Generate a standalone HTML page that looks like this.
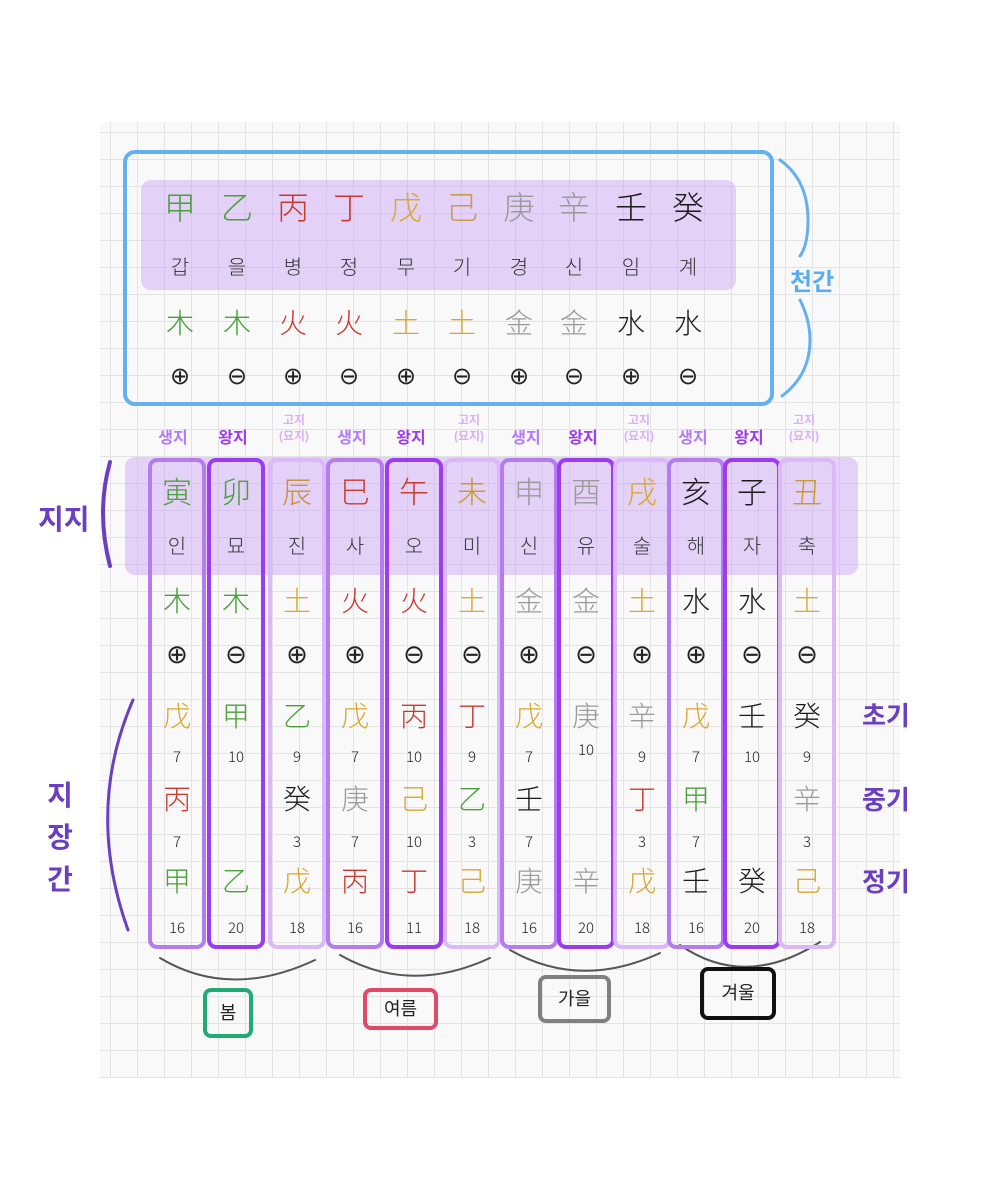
<!DOCTYPE html>
<html><head><meta charset="utf-8"><style>
body{margin:0;width:1000px;height:1200px;background:#fff;position:relative;overflow:hidden;font-family:"Liberation Sans","Noto Sans CJK KR",sans-serif}
.grid{position:absolute;left:100px;top:122px;width:800px;height:956px;background-color:#f9f9f9;
background-image:linear-gradient(#e3e3e3 1px,transparent 1px),linear-gradient(90deg,#e3e3e3 1px,transparent 1px);background-size:27px 27px;background-position:10px 10px}
.a{position:absolute}
.hl{position:absolute;background:rgba(200,160,245,.45);border-radius:10px}
.col{position:absolute;top:458px;width:50px;height:483px;border-radius:9px;border:4px solid}
.s{border-color:#b57cf0}.w{border-color:#9b3cf0}.g{border-color:#dcb8f8}
.col div,.tc div{position:absolute;left:-4px;width:58px;height:40px;line-height:40px;text-align:center;font-family:"Noto Sans CJK SC",sans-serif;font-weight:300}
.r1{top:8px;font-size:30px}.r2{top:63px;font-size:20px;color:#333}.r3{top:118px;font-size:28px}.r4{top:173px;font-size:26px;color:#222;font-family:"DejaVu Sans",sans-serif!important}
.r5{top:233px;font-size:28px}.r6{top:275px;font-size:15px;color:#222}.r7{top:316px;font-size:28px}.r8{top:360px;font-size:15px;color:#222}.r9{top:398px;font-size:28px}.r10{top:446px;font-size:15px;color:#222}
.W{color:#4aa03a}.F{color:#c83a30}.E{color:#d8a830}.M{color:#9a9a9a}.K{color:#1a1a1a}
.tc{position:absolute;top:180px;width:50px;height:220px}
.tc div{left:0;width:50px}
.t1{top:6px!important;font-size:32px}.t2{top:66px!important;font-size:20px;color:#333}.t3{top:122px!important;font-size:28px}.t4{top:176px!important;font-size:24px;color:#222;font-family:"DejaVu Sans",sans-serif!important}
.lab{position:absolute;font-weight:bold;font-size:16px;text-align:center;width:56px}
.sm{font-size:12px;color:#dcb0f8;line-height:16px}
.pl{color:#6a3fc0;font-weight:bold;position:absolute}
.box{position:absolute;border:4px solid;border-radius:8px;text-align:center;font-size:18px;color:#222;box-sizing:border-box}
</style></head><body>
<div class="grid"></div>
<div class="hl" style="left:141px;top:180px;width:595px;height:110px"></div>
<div class="a" style="left:123px;top:150px;width:643px;height:248px;border:4px solid #64b0f0;border-radius:12px"></div>
<div class="tc" style="left:155px"><div class="t1 W">甲</div><div class="t2">갑</div><div class="t3 W">木</div><div class="t4">⊕</div></div>
<div class="tc" style="left:212px"><div class="t1 W">乙</div><div class="t2">을</div><div class="t3 W">木</div><div class="t4">⊖</div></div>
<div class="tc" style="left:268px"><div class="t1 F">丙</div><div class="t2">병</div><div class="t3 F">火</div><div class="t4">⊕</div></div>
<div class="tc" style="left:324px"><div class="t1 F">丁</div><div class="t2">정</div><div class="t3 F">火</div><div class="t4">⊖</div></div>
<div class="tc" style="left:381px"><div class="t1 E">戊</div><div class="t2">무</div><div class="t3 E">土</div><div class="t4">⊕</div></div>
<div class="tc" style="left:437px"><div class="t1" style="color:#c89a50">己</div><div class="t2">기</div><div class="t3 E">土</div><div class="t4">⊖</div></div>
<div class="tc" style="left:494px"><div class="t1 M">庚</div><div class="t2">경</div><div class="t3 M">金</div><div class="t4">⊕</div></div>
<div class="tc" style="left:549px"><div class="t1 M">辛</div><div class="t2">신</div><div class="t3 M">金</div><div class="t4">⊖</div></div>
<div class="tc" style="left:606px"><div class="t1 K">壬</div><div class="t2">임</div><div class="t3 K">水</div><div class="t4">⊕</div></div>
<div class="tc" style="left:663px"><div class="t1 K">癸</div><div class="t2">계</div><div class="t3 K">水</div><div class="t4">⊖</div></div>
<svg class="a" style="left:0;top:0" width="1000" height="1200" fill="none" stroke-linecap="round">
<path d="M780 160 Q808 180 808 220 Q808 245 800 256" stroke="#64b0f0" stroke-width="3"/>
<path d="M800 300 Q810 320 810 340 Q810 375 782 396" stroke="#64b0f0" stroke-width="3"/>
<path d="M110 462 Q96 512 110 566" stroke="#6a3fc0" stroke-width="4"/>
<path d="M133 700 Q85 810 128 930" stroke="#6a3fc0" stroke-width="3"/>
<path d="M160 958 Q230 1000 315 960" stroke="#555" stroke-width="2"/>
<path d="M340 955 Q410 995 490 958" stroke="#555" stroke-width="2"/>
<path d="M510 950 Q580 990 660 953" stroke="#555" stroke-width="2"/>
<path d="M680 945 Q745 990 820 942" stroke="#555" stroke-width="2"/>
</svg>
<div class="pl" style="left:790px;top:262px;font-size:24px;color:#5aaef0">천간</div>
<div class="hl" style="left:125px;top:457px;width:733px;height:118px"></div>
<div class="lab" style="left:145px;top:424px;color:#b57cf0">생지</div>
<div class="lab" style="left:205px;top:424px;color:#9b3cf0">왕지</div>
<div class="lab sm" style="left:266px;top:412px">고지<br>(묘지)</div>
<div class="lab" style="left:324px;top:424px;color:#b57cf0">생지</div>
<div class="lab" style="left:383px;top:424px;color:#9b3cf0">왕지</div>
<div class="lab sm" style="left:441px;top:412px">고지<br>(묘지)</div>
<div class="lab" style="left:498px;top:424px;color:#b57cf0">생지</div>
<div class="lab" style="left:555px;top:424px;color:#9b3cf0">왕지</div>
<div class="lab sm" style="left:611px;top:412px">고지<br>(묘지)</div>
<div class="lab" style="left:665px;top:424px;color:#b57cf0">생지</div>
<div class="lab" style="left:721px;top:424px;color:#9b3cf0">왕지</div>
<div class="lab sm" style="left:776px;top:412px">고지<br>(묘지)</div>
<div class="col s" style="left:148px"><div class="r1 W">寅</div><div class="r2">인</div><div class="r3 W">木</div><div class="r4">⊕</div><div class="r5 E">戊</div><div class="r6">7</div><div class="r7 F">丙</div><div class="r8">7</div><div class="r9 W">甲</div><div class="r10">16</div></div>
<div class="col w" style="left:207px"><div class="r1 W">卯</div><div class="r2">묘</div><div class="r3 W">木</div><div class="r4">⊖</div><div class="r5 W">甲</div><div class="r6">10</div><div class="r9 W">乙</div><div class="r10">20</div></div>
<div class="col g" style="left:268px"><div class="r1" style="color:#c89040">辰</div><div class="r2">진</div><div class="r3 E">土</div><div class="r4">⊕</div><div class="r5 W">乙</div><div class="r6">9</div><div class="r7 K">癸</div><div class="r8">3</div><div class="r9 E">戊</div><div class="r10">18</div></div>
<div class="col s" style="left:326px"><div class="r1 F">巳</div><div class="r2">사</div><div class="r3 F">火</div><div class="r4">⊕</div><div class="r5 E">戊</div><div class="r6">7</div><div class="r7 M">庚</div><div class="r8">7</div><div class="r9 F">丙</div><div class="r10">16</div></div>
<div class="col w" style="left:385px"><div class="r1 F">午</div><div class="r2">오</div><div class="r3 F">火</div><div class="r4">⊖</div><div class="r5 F">丙</div><div class="r6">10</div><div class="r7 E">己</div><div class="r8">10</div><div class="r9 F">丁</div><div class="r10">11</div></div>
<div class="col g" style="left:443px"><div class="r1 E" style="color:#c89a30">未</div><div class="r2">미</div><div class="r3 E">土</div><div class="r4">⊖</div><div class="r5 F">丁</div><div class="r6">9</div><div class="r7 W">乙</div><div class="r8">3</div><div class="r9 E">己</div><div class="r10">18</div></div>
<div class="col s" style="left:500px"><div class="r1 M">申</div><div class="r2">신</div><div class="r3 M">金</div><div class="r4">⊕</div><div class="r5 E">戊</div><div class="r6">7</div><div class="r7 K">壬</div><div class="r8">7</div><div class="r9 M">庚</div><div class="r10">16</div></div>
<div class="col w" style="left:557px"><div class="r1 M">酉</div><div class="r2">유</div><div class="r3 M">金</div><div class="r4">⊖</div><div class="r5 M">庚</div><div class="r6" style="top:268px">10</div><div class="r9 M">辛</div><div class="r10">20</div></div>
<div class="col g" style="left:613px"><div class="r1 E">戌</div><div class="r2">술</div><div class="r3 E">土</div><div class="r4">⊕</div><div class="r5 M">辛</div><div class="r6">9</div><div class="r7 F">丁</div><div class="r8">3</div><div class="r9 E">戊</div><div class="r10">18</div></div>
<div class="col s" style="left:667px"><div class="r1 K">亥</div><div class="r2">해</div><div class="r3 K">水</div><div class="r4">⊕</div><div class="r5 E">戊</div><div class="r6">7</div><div class="r7 W">甲</div><div class="r8">7</div><div class="r9 K">壬</div><div class="r10">16</div></div>
<div class="col w" style="left:723px"><div class="r1 K">子</div><div class="r2">자</div><div class="r3 K">水</div><div class="r4">⊖</div><div class="r5 K">壬</div><div class="r6">10</div><div class="r9 K">癸</div><div class="r10">20</div></div>
<div class="col g" style="left:778px"><div class="r1 E" style="color:#c89a30">丑</div><div class="r2">축</div><div class="r3 E">土</div><div class="r4">⊖</div><div class="r5 K">癸</div><div class="r6">9</div><div class="r7 M">辛</div><div class="r8">3</div><div class="r9 E">己</div><div class="r10">18</div></div>
<div class="pl" style="left:38px;top:498px;font-size:28px">지지</div>
<div class="pl" style="left:40px;top:775px;font-size:28px;line-height:42px;width:40px;text-align:center">지<br>장<br>간</div>
<div class="pl" style="left:862px;top:696px;font-size:26px">초기</div>
<div class="pl" style="left:862px;top:780px;font-size:26px">중기</div>
<div class="pl" style="left:862px;top:862px;font-size:26px">정기</div>
<div class="box" style="left:203px;top:988px;width:50px;height:50px;line-height:42px;border-color:#1faa78">봄</div>
<div class="box" style="left:363px;top:988px;width:75px;height:42px;line-height:34px;border-color:#e04a6a">여름</div>
<div class="box" style="left:538px;top:975px;width:73px;height:48px;line-height:40px;border-color:#808080">가을</div>
<div class="box" style="left:700px;top:967px;width:76px;height:53px;line-height:45px;border-color:#111">겨울</div>
</body></html>
